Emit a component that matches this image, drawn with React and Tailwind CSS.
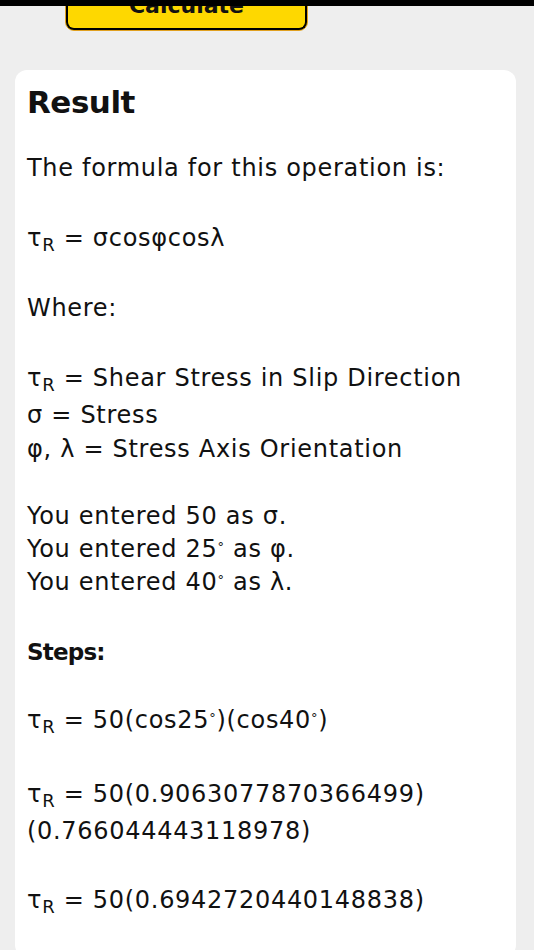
export default function App() {
  return (
    <div className="relative min-h-[950px] bg-[#eeeeee] overflow-hidden text-[#111111]" style={{ fontFamily: '"DejaVu Sans", sans-serif' }}>
      {/* top bar over the cut-off button */}
      <div className="absolute top-0 left-0 w-full h-[6px] bg-black z-10" />

      <div className="ml-[65px] w-[243px] -mt-[22px] h-[53px] rounded-b-[9px] border border-[#e0a020] bg-[#fed800]">
        <div className="h-full rounded-b-[8px] border-2 border-t-0 border-black flex items-start justify-center pt-[16px]">
          <span className="text-[22px] font-bold leading-none">Calculate</span>
        </div>
      </div>

      <div className="mt-[39px] ml-[15px] w-[501px] bg-white rounded-[12px] px-[12px] pt-[12px] pb-[40px] text-[24px] tracking-[0.7px]">
        <div className="text-[31px] font-bold leading-[40px] tracking-[-0.5px]">Result</div>

        <div className="mt-[29px] leading-[34px]">The formula for this operation is:</div>

        <div className="mt-[36px] leading-[34px]">
          τ<sub>R</sub> = σcosφcosλ
        </div>

        <div className="mt-[36px] leading-[34px]">Where:</div>

        <div className="mt-[34px]">
          <div className="leading-[39px]">
            τ<sub>R</sub> = Shear Stress in Slip Direction
          </div>
          <div className="leading-[34px]">σ = Stress</div>
          <div className="leading-[34px]">φ, λ = Stress Axis Orientation</div>
        </div>

        <div className="mt-[34px] leading-[33px]">
          <div>You entered 50 as σ.</div>
          <div>
            You entered 25<sup className="text-[13px]">°</sup> as φ.
          </div>
          <div>
            You entered 40<sup className="text-[13px]">°</sup> as λ.
          </div>
        </div>

        <div className="mt-[36px] leading-[34px] font-bold text-[23px] tracking-[-0.8px]">Steps:</div>

        <div className="mt-[34px] leading-[34px]">
          τ<sub>R</sub> = 50(cos25<sup className="text-[13px]">°</sup>)(cos40<sup className="text-[13px]">°</sup>)
        </div>

        <div className="mt-[39px] leading-[37px]">
          <div>
            τ<sub>R</sub> = 50(0.9063077870366499)
          </div>
          <div>(0.766044443118978)</div>
        </div>

        <div className="mt-[33px] leading-[34px]">
          τ<sub>R</sub> = 50(0.6942720440148838)
        </div>
      </div>
    </div>
  );
}
